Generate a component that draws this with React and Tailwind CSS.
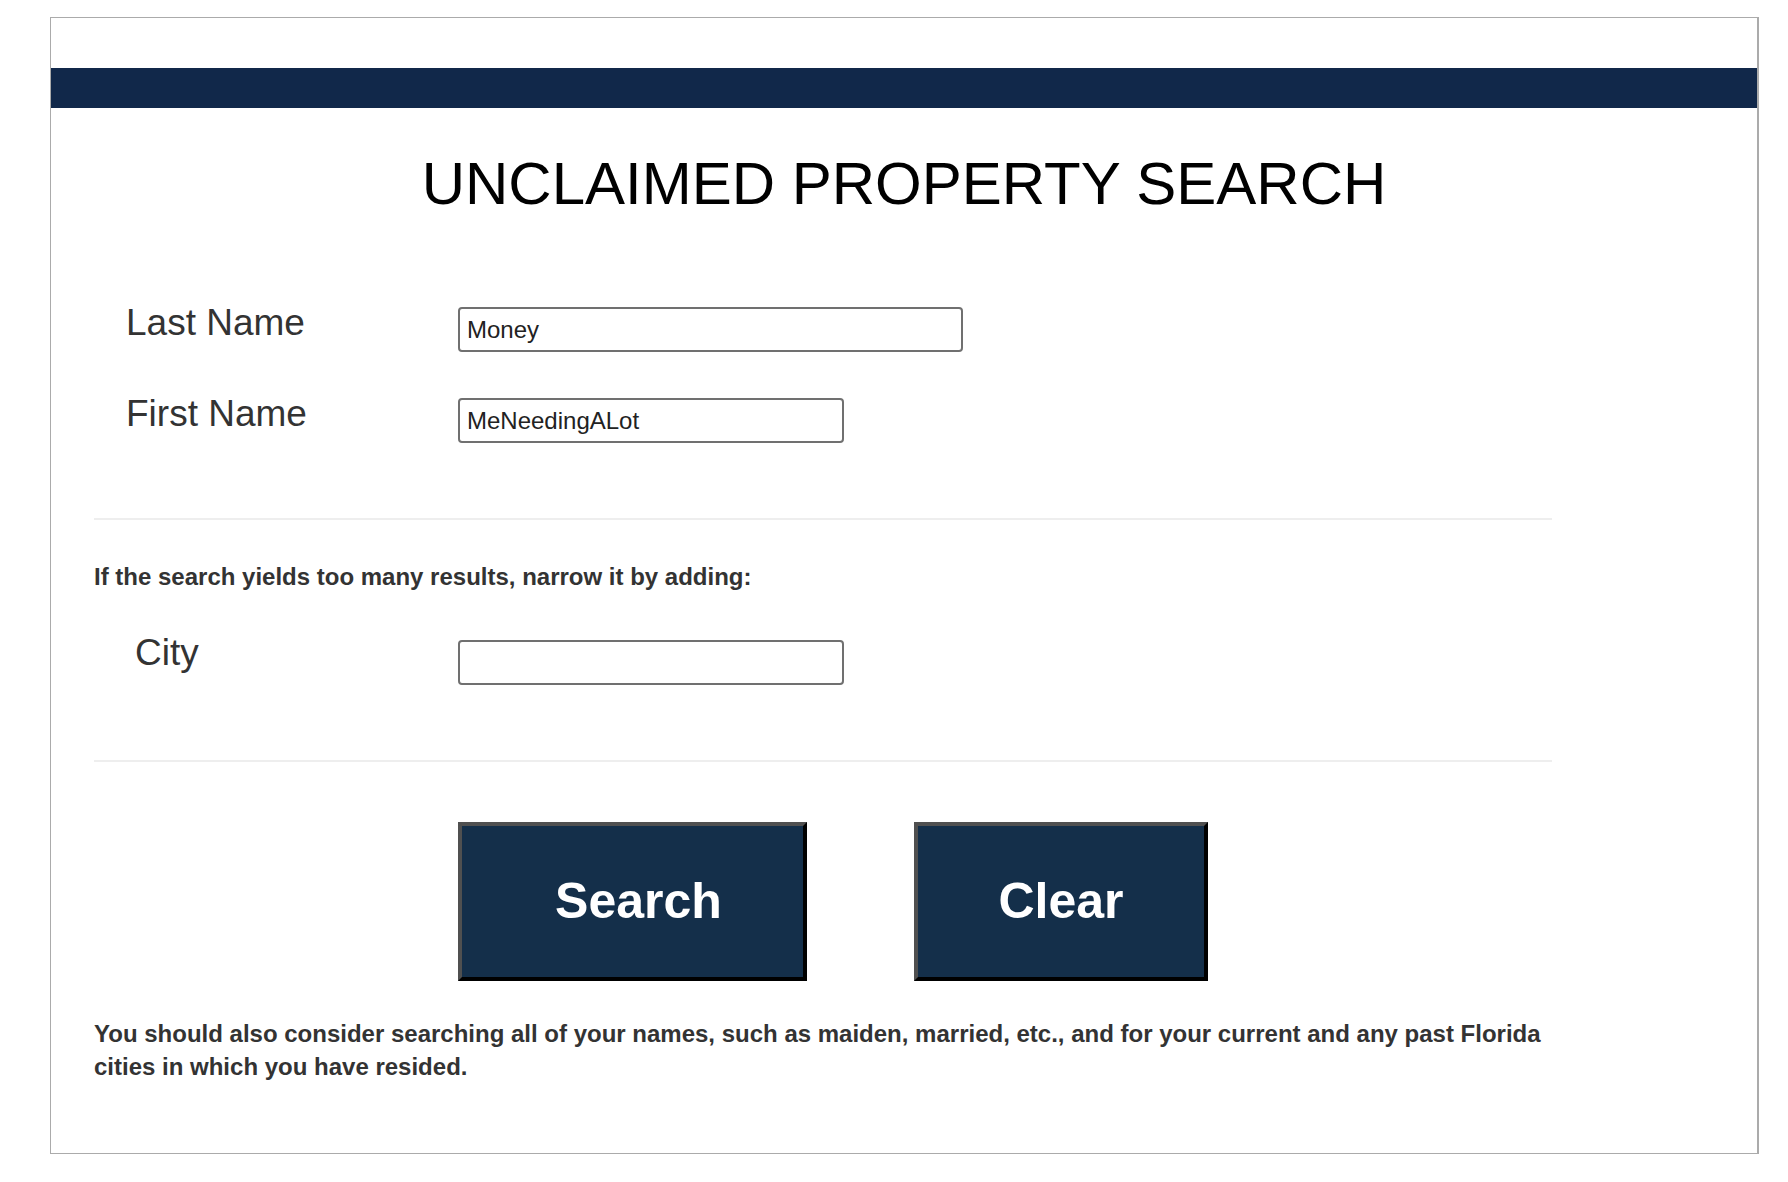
import React from "react";

const Field = ({ label, value, width, labelClass }) => {
  return (
    <div className="flex items-start">
      <label className={"w-[364px] shrink-0 text-[37px] text-[#333] " + labelClass}>{label}</label>
      <input
        type="text"
        defaultValue={value}
        className={"h-[45px] rounded-[4px] border-2 border-[#707070] bg-white px-[7px] text-[24px] text-[#222] outline-none " + width}
      />
    </div>
  );
};

const App = () => {
  return (
    <div className="min-h-screen bg-white pt-[17px] pl-[50px] font-['Liberation_Sans',Arial,sans-serif]">
      <div className="h-[1137px] w-[1709px] border border-r-2 border-[#ababab] bg-white">
        <div className="mt-[50px] h-[40px] bg-[#11284a]"></div>

        <h1 className="mt-[40px] text-center text-[60px] leading-[72px] text-black">
          UNCLAIMED PROPERTY SEARCH
        </h1>

        <div className="ml-[43px] w-[1458px]">
          <div className="mt-[87px] flex flex-col gap-[46px]">
            <Field label="Last Name" value="Money" width="w-[505px]" labelClass="pl-[32px] leading-[32px]" />
            <Field label="First Name" value="MeNeedingALot" width="w-[386px]" labelClass="pl-[32px] leading-[32px]" />
          </div>

          <hr className="mt-[75px] border-t-2 border-[#eeeeee]" />

          <p className="mt-[40px] text-[24px] font-bold leading-[34px] text-[#333]">
            If the search yields too many results, narrow it by adding:
          </p>

          <div className="mt-[46px]">
            <Field label="City" value="" width="w-[386px]" labelClass="pl-[41px] leading-[26px]" />
          </div>

          <hr className="mt-[75px] border-t-2 border-[#eeeeee]" />

          <div className="mt-[60px] ml-[364px] flex gap-[107px]">
            <button className="h-[159px] w-[349px] border-4 border-t-[#505050] border-l-[#505050] border-r-black border-b-black bg-[#142f4a] pl-[12px] text-[50px] font-bold text-white">
              Search
            </button>
            <button className="h-[159px] w-[294px] border-4 border-t-[#505050] border-l-[#505050] border-r-black border-b-black bg-[#142f4a] text-[50px] font-bold text-white">
              Clear
            </button>
          </div>

          <p className="mt-[36px] text-[24px] font-bold leading-[33px] text-[#333]">
            You should also consider searching all of your names, such as maiden, married, etc., and for your current and any past Florida cities in which you have resided.
          </p>
        </div>
      </div>
    </div>
  );
};

export default App;
